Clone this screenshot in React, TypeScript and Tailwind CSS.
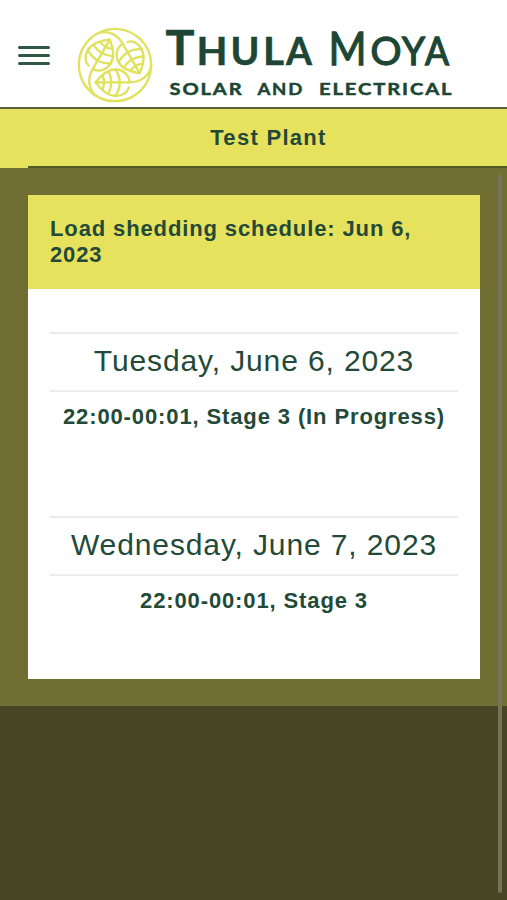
import React from 'react';

const schedule = [
    { day: 'Tuesday, June 6, 2023', slot: '22:00-00:01, Stage 3 (In Progress)' },
    { day: 'Wednesday, June 7, 2023', slot: '22:00-00:01, Stage 3' },
];

const Leaf = ({ angle }: { angle: number }) => (
    <g transform={`rotate(${angle})`}>
        <path d="M-19.3 17.3C-13 9 -6 4.2 1 4.5C9 5 14.5 10.5 14.5 17.4" />
        <path d="M-19.3 17.3C-13 26 -6 31 1 31C8 30.5 12.5 27 13.8 22.5" />
        <path d="M-19.3 17.3H14.5C26 17.3 34 11 36.3 1" />
        <path d="M-12.5 10.5Q-9.5 17.3 -12.5 24.5M-6.5 6.5Q-1 17.3 -6.5 28.5M0.5 4.5Q9 17.3 0.5 31" />
    </g>
);

const Logo = () => (
    <svg className="block shrink-0 overflow-visible" width="385" height="84" viewBox="74 22 385 84">
        <g transform="translate(115 65)" fill="none" stroke="#dfe25a" strokeWidth="2.3" strokeLinecap="round" strokeLinejoin="round">
            <circle r="36.2" />
            <Leaf angle={0} />
            <Leaf angle={120} />
            <Leaf angle={240} />
        </g>
        <g fill="#1d4635" stroke="#1d4635" fontFamily="Lato, sans-serif">
            <g fontWeight="700" strokeWidth="0.5">
                <text x="165.5" y="65" fontSize="47" textLength="29" lengthAdjust="spacingAndGlyphs">T</text>
                <text x="196.5" y="65" fontSize="39" textLength="31" lengthAdjust="spacingAndGlyphs">H</text>
                <text x="230.5" y="65" fontSize="39">U</text>
                <text x="263" y="65" fontSize="39" textLength="21" lengthAdjust="spacingAndGlyphs">L</text>
                <text x="286" y="65" fontSize="39" textLength="26" lengthAdjust="spacingAndGlyphs">A</text>
            </g>
            <g fontWeight="400" strokeWidth="1.3">
                <text x="328.5" y="65" fontSize="47" textLength="38" lengthAdjust="spacingAndGlyphs">M</text>
                <text x="370.5" y="65" fontSize="38.5" textLength="31" lengthAdjust="spacingAndGlyphs">O</text>
                <text x="402" y="65" fontSize="39" textLength="23" lengthAdjust="spacingAndGlyphs">Y</text>
                <text x="425" y="65" fontSize="39" textLength="24" lengthAdjust="spacingAndGlyphs">A</text>
            </g>
            <g fontWeight="700" fontSize="17.2" strokeWidth="0.5" letterSpacing="1.6">
                <text x="169.5" y="95" textLength="74" lengthAdjust="spacingAndGlyphs">SOLAR</text>
                <text x="257.5" y="95" textLength="46.5" lengthAdjust="spacingAndGlyphs">AND</text>
                <text x="319" y="95" textLength="134.5" lengthAdjust="spacingAndGlyphs">ELECTRICAL</text>
            </g>
        </g>
    </svg>
);

const App = () => {
    return (
        <div className="relative flex h-[900px] w-[507px] flex-col overflow-hidden bg-[#464524] font-['Liberation_Sans',Arial,sans-serif] text-[#234a38]">
            <header className="flex h-[107px] shrink-0 items-start bg-white pl-[18px] pt-[22px]">
                <button className="mt-6 flex w-8 flex-col gap-[5px]" aria-label="Menu">
                    <span className="h-[3px] rounded-full bg-[#2f5747]" />
                    <span className="h-[3px] rounded-full bg-[#2f5747]" />
                    <span className="h-[3px] rounded-full bg-[#2f5747]" />
                </button>
                <div className="ml-6">
                    <Logo />
                </div>
            </header>

            <div className="h-[61px] shrink-0 border-t-2 border-[#59613c] bg-[#e7e25e]">
                <h1 className="flex h-[57px] items-center justify-center pl-[30px] text-[22px] font-bold tracking-[1.3px]">Test Plant</h1>
                <div className="ml-7 h-0.5 bg-[#4e5a26]" />
            </div>

            <main className="h-[538px] shrink-0 bg-[#706e33] py-[27px] pl-7 pr-[27px]">
                <section className="h-[484px] bg-white">
                    <h2 className="h-[94px] bg-[#e7e25e] px-[22px] pt-[21px] text-[22px] font-bold leading-[26px] tracking-[0.88px]">
                        Load shedding schedule: Jun 6, 2023
                    </h2>
                    <div className="flex flex-col gap-[74px] px-[22px] pt-[43px] text-center">
                        {schedule.map((item) => (
                            <div key={item.day}>
                                <h3 className="flex h-[60px] items-center justify-center whitespace-nowrap border-y-2 border-[#ececec] pb-[3px] text-[30px] tracking-[0.88px]">
                                    {item.day}
                                </h3>
                                <p className="flex h-[50px] items-center justify-center whitespace-nowrap pb-0.5 text-[22px] font-bold tracking-[0.88px]">{item.slot}</p>
                            </div>
                        ))}
                    </div>
                </section>
            </main>

            <div className="absolute right-[5px] top-[174px] h-[719px] w-1 rounded-full bg-[#75725a]" />
        </div>
    );
};

export default App;
